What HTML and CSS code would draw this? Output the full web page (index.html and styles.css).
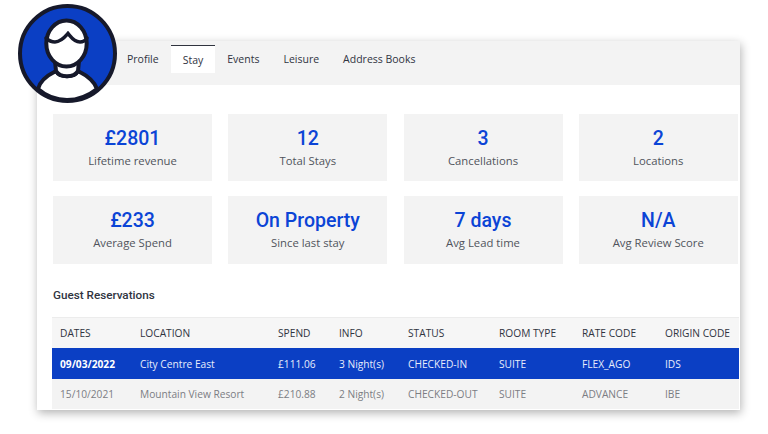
FILE: index.html
```html
<!DOCTYPE html>
<html>
<head>
  <meta charset="utf-8">
  <title>Guest Profile</title>
  <meta name="viewport" content="width=device-width, initial-scale=1">
  <link rel="stylesheet" href="styles.css">
</head>
<body>

<svg class="avatar" viewBox="0 0 99 99" width="99" height="99">
  <circle cx="49.5" cy="49.5" r="47.5" fill="#0b3fc4"/>
  <path d="M20 85 C22 76 30 71 38 67 C42 74 56 74 60 67 C68 71 76 76 79 85 C70 92 60 96 49 96 C38 96 28 92 20 85 Z" fill="#fff" stroke="#16192b" stroke-width="4" stroke-linejoin="round"/>
  <path d="M37 57 L38 67 C42 74 56 74 60 67 L61 57 Z" fill="#fff" stroke="#16192b" stroke-width="4" stroke-linejoin="round"/>
  <ellipse cx="48.5" cy="39.5" rx="20.2" ry="23" fill="#fff" stroke="#16192b" stroke-width="4"/>
  <path d="M28 34 C31 37 34 38 37 38 C43 38 47 33 50 29.5 C53 33 56 38 62 38 C65 38 67 37 69 34" fill="none" stroke="#16192b" stroke-width="3.5" stroke-linecap="round"/>
  <circle cx="49.5" cy="49.5" r="47.5" fill="none" stroke="#16192b" stroke-width="4"/>
</svg>

<div class="panel">
  <div class="tabs">
    <a class="tab">Profile</a>
    <a class="tab active">Stay</a>
    <a class="tab">Events</a>
    <a class="tab">Leisure</a>
    <a class="tab">Address Books</a>
  </div>

  <div class="stats">
    <div class="stat"><div class="value">£2801</div><div class="label">Lifetime revenue</div></div>
    <div class="stat"><div class="value">12</div><div class="label">Total Stays</div></div>
    <div class="stat"><div class="value">3</div><div class="label">Cancellations</div></div>
    <div class="stat"><div class="value">2</div><div class="label">Locations</div></div>
    <div class="stat"><div class="value">£233</div><div class="label">Average Spend</div></div>
    <div class="stat"><div class="value">On Property</div><div class="label">Since last stay</div></div>
    <div class="stat"><div class="value">7 days</div><div class="label">Avg Lead time</div></div>
    <div class="stat"><div class="value">N/A</div><div class="label">Avg Review Score</div></div>
  </div>

  <h2 class="section-title">Guest Reservations</h2>

  <div class="table">
    <div class="row head">
      <span>DATES</span><span>LOCATION</span><span>SPEND</span><span>INFO</span><span>STATUS</span><span>ROOM TYPE</span><span>RATE CODE</span><span>ORIGIN CODE</span>
    </div>
    <div class="row selected">
      <span class="date">09/03/2022</span><span>City Centre East</span><span>£111.06</span><span>3 Night(s)</span><span>CHECKED-IN</span><span>SUITE</span><span>FLEX_AGO</span><span>IDS</span>
    </div>
    <div class="row past">
      <span>15/10/2021</span><span>Mountain View Resort</span><span>£210.88</span><span>2 Night(s)</span><span>CHECKED-OUT</span><span>SUITE</span><span>ADVANCE</span><span>IBE</span>
    </div>
  </div>
</div>

</body>
</html>
```

FILE: styles.css
```css
html, body {
  margin: 0;
  padding: 0;
  height: 434px;
  overflow: hidden;
  background-color: #fff;
  font-family: 'Open Sans', sans-serif;
}
.avatar {
  position: absolute;
  left: 18px;
  top: 4px;
}
.panel {
  width: 703px;
  height: 369px;
  margin: 41px 0 0 37px;
  background: #fff;
  box-shadow: 1px 3px 9px rgba(0,0,0,0.3);
  overflow: hidden;
}
.tabs {
  display: flex;
  height: 44px;
  padding: 4px 0 0 78px;
  box-sizing: border-box;
  background-color: #f3f3f3;
  font-size: 10.5px;
  color: #30343f;
}
.tab {
  height: 28px;
  line-height: 29px;
  padding: 0 12px;
  box-sizing: border-box;
}
.tab.active {
  background-color: #fff;
  border-top: 1px solid #30343f;
  line-height: 27px;
  padding-top: 1px;
}
.stats {
  display: grid;
  grid-template-columns: repeat(4, 159px);
  grid-template-rows: 67px 68px;
  column-gap: 16.25px;
  row-gap: 15px;
  padding: 29px 0 0 16px;
}
.stat {
  background-color: #f3f3f3;
  text-align: center;
}
.value {
  margin-top: 13px;
  font-family: Roboto, sans-serif;
  font-weight: 500;
  font-size: 19.5px;
  line-height: 24px;
  color: #0b44d6;
}
.label {
  margin-top: 2px;
  font-size: 11.3px;
  line-height: 16px;
  color: #50535c;
}
.section-title {
  margin: 23px 0 0 16px;
  font-family: Roboto, sans-serif;
  font-weight: 500;
  font-size: 11.7px;
  line-height: 16px;
  color: #30343f;
}
.table {
  width: 687px;
  margin: 14px 0 0 15px;
  font-size: 10.2px;
}
.row {
  display: grid;
  grid-template-columns: 80px 138px 61px 69px 91px 83px 83px 1fr;
  align-items: center;
  padding-left: 8px;
  height: 30px;
  white-space: nowrap;
}
.row.head {
  height: 31px;
  background-color: #f6f6f6;
  border-top: 1px solid #ececec;
  box-sizing: border-box;
  color: #30343f;
}
.row.selected {
  height: 31px;
  background-color: #0b3fc4;
  color: #e8edfb;
}
.row.selected .date {
  font-weight: 700;
  color: #fff;
}
.row.past {
  background-color: #f3f3f3;
  color: #7b7d83;
}
```
